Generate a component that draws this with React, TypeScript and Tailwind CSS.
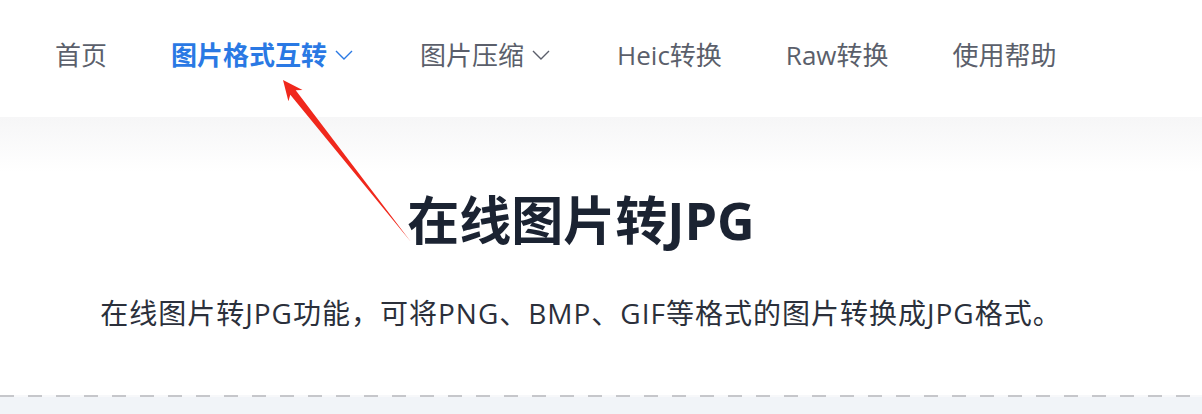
const font = { fontFamily: '"Open Sans", "Noto Sans CJK SC", sans-serif' };

function Chevron({ color }: { color: string }) {
  return (
    <svg width="18" height="10" viewBox="0 0 18 10" fill="none" className={color}>
      <polyline points="1,1 9,9 17,1" stroke="currentColor" strokeWidth="1.4" />
    </svg>
  );
}

function NavItem({ label, active, dropdown }: { label: string; active?: boolean; dropdown?: boolean }) {
  return (
    <div className="flex items-center">
      <span
        className={
          active
            ? 'text-[26px] font-bold text-[#2a79e4] leading-none'
            : 'text-[26px] text-[#5b5f6b] leading-none'
        }
      >
        {label}
      </span>
      {dropdown && (
        <span className="ml-[8px] mr-[3px] flex">
          <Chevron color={active ? 'text-[#2a79e4]' : 'text-[#5b5f6b]'} />
        </span>
      )}
    </div>
  );
}

export default function App() {
  return (
    <div className="relative h-[414px] w-[1202px] overflow-hidden bg-white" style={font}>
      <nav className="flex h-[117px] items-center gap-16 bg-white pl-[55px] pb-[8px]">
        <NavItem label="首页" />
        <NavItem label="图片格式互转" active dropdown />
        <NavItem label="图片压缩" dropdown />
        <NavItem label="Heic转换" />
        <NavItem label="Raw转换" />
        <NavItem label="使用帮助" />
      </nav>

      <section className="flex h-[278px] flex-col items-center bg-gradient-to-b from-[#f6f6f7] to-white to-[20%] pr-[40px] pt-[77px]">
        <h1 className="text-[52px] font-bold leading-none text-[#1b2332]">在线图片转JPG</h1>
        <p className="mt-[53px] text-[28px] leading-none tracking-[1px] text-[#2b303b]">
          在线图片转JPG功能，可将PNG、BMP、GIF等格式的图片转换成JPG格式。
        </p>
      </section>
      <div className="h-[2px] bg-[repeating-linear-gradient(to_right,#c6c7cb_0_14px,transparent_14px_28px)] bg-[#f7f8fa]" />
      <div className="h-[17px] bg-[#f1f4f8]" />

      <svg className="pointer-events-none absolute inset-0" width="1202" height="414" viewBox="0 0 1202 414">
        <polygon
          points="283,80 302.5,90.1 295.7,90.3 411,242 290.3,94.7 288.4,101.3"
          fill="#f0281c"
        />
      </svg>
    </div>
  );
}
